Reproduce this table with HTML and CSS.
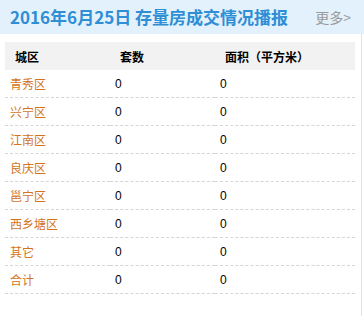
FILE: index.html
```html
<!DOCTYPE html>
<html lang="zh">
<head>
<meta charset="utf-8">
<title>存量房成交情况播报</title>
<link rel="stylesheet" href="styles.css">
</head>
<body>
<div class="widget">
  <div class="head">
    <h2 class="title">2016年6月25日 存量房成交情况播报</h2>
    <a class="more" href="#">更多&gt;</a>
  </div>
  <div class="body">
    <table class="stats">
      <colgroup><col class="w1"><col class="w2"><col class="w3"></colgroup>
      <thead>
        <tr><th>城区</th><th>套数</th><th>面积（平方米）</th></tr>
      </thead>
      <tbody>
        <tr><td class="name">青秀区</td><td>0</td><td>0</td></tr>
        <tr><td class="name">兴宁区</td><td>0</td><td>0</td></tr>
        <tr><td class="name">江南区</td><td>0</td><td>0</td></tr>
        <tr><td class="name">良庆区</td><td>0</td><td>0</td></tr>
        <tr><td class="name">邕宁区</td><td>0</td><td>0</td></tr>
        <tr><td class="name">西乡塘区</td><td>0</td><td>0</td></tr>
        <tr><td class="name">其它</td><td>0</td><td>0</td></tr>
        <tr><td class="name">合计</td><td>0</td><td>0</td></tr>
      </tbody>
    </table>
  </div>
</div>
</body>
</html>
```
FILE: styles.css
```css
html, body {
  margin: 0;
  padding: 0;
  background: #fff;
}
body {
  font-family: "Noto Sans CJK SC", "Noto Sans", sans-serif;
  font-size: 12px;
  color: #000;
}
.widget {
  width: 362px;
  height: 316px;
  display: flex;
  flex-direction: column;
}
.head {
  height: 34px;
  width: 364px;
  background: #e3f1fc;
  display: flex;
  align-items: center;
  justify-content: space-between;
  padding: 0 13px 0 10px;
  box-sizing: border-box;
}
.title {
  margin: 0;
  font-size: 17px;
  font-weight: bold;
  color: #2e8ed6;
  line-height: 34px;
  white-space: nowrap;
}
.more {
  font-size: 14px;
  color: #9a9a9a;
  text-decoration: none;
  line-height: 34px;
}
.body {
  flex: 1;
  border-right: 1px solid #e2e2e2;
  padding: 8px 6px 0 5px;
}
.stats {
  width: 350px;
  border-collapse: collapse;
  table-layout: fixed;
}
.stats .w1 { width: 105px; }
.stats .w2 { width: 105px; }
.stats .w3 { width: 140px; }
.stats th {
  height: 28px;
  padding: 0 0 0 10px;
  background: #f2f2f2;
  text-align: left;
  font-weight: bold;
  font-size: 12px;
}
.stats td {
  height: 27px;
  padding: 0 0 0 5px;
  border-bottom: 1px dashed #d6d6d6;
  font-family: "Liberation Sans", Arial, sans-serif;
  font-size: 12px;
}
.stats td.name {
  color: #d4741c;
  font-family: "Noto Sans CJK SC", sans-serif;
}
```
